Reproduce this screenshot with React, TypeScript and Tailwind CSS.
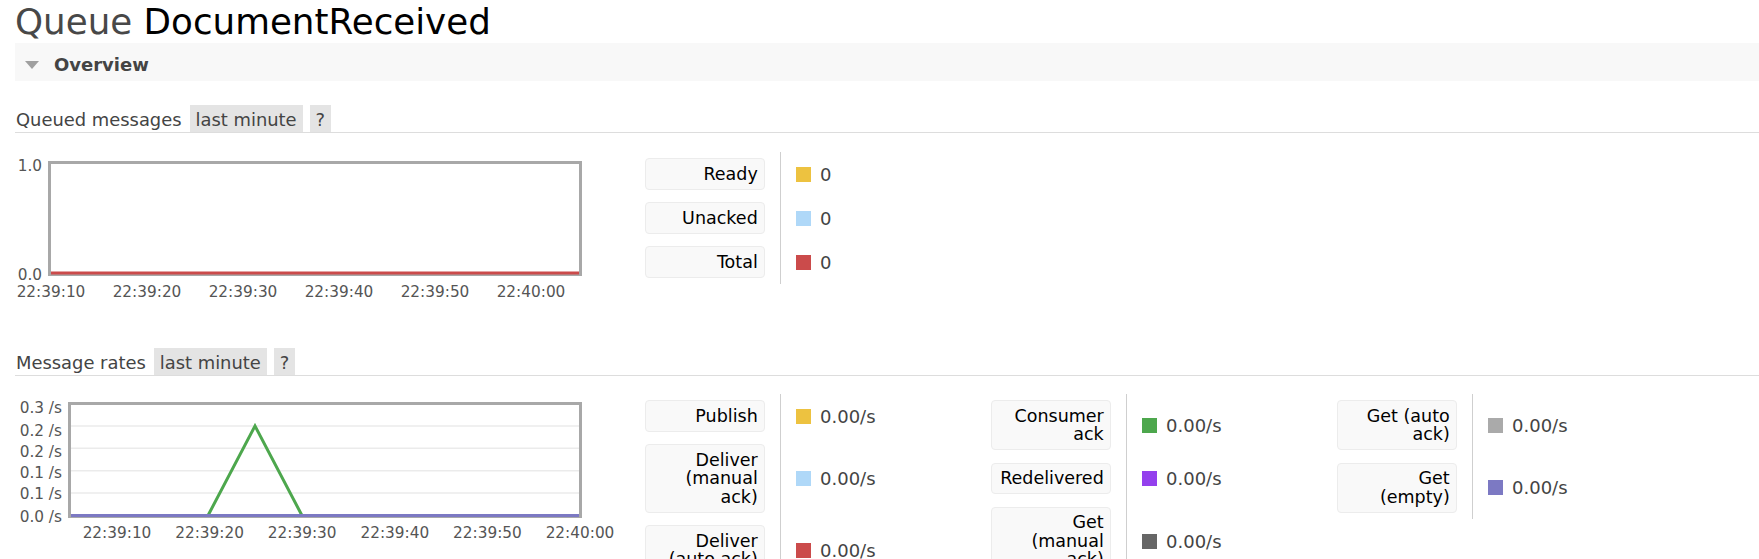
import React from 'react'

type Row = { label: string; color: string; value: string }

const queued: Row[] = [
  { label: 'Ready', color: '#edc240', value: '0' },
  { label: 'Unacked', color: '#afd8f8', value: '0' },
  { label: 'Total', color: '#cb4b4b', value: '0' },
]

const rateGroups: Row[][] = [
  [
    { label: 'Publish', color: '#edc240', value: '0.00/s' },
    { label: 'Deliver (manual ack)', color: '#afd8f8', value: '0.00/s' },
    { label: 'Deliver (auto ack)', color: '#cb4b4b', value: '0.00/s' },
  ],
  [
    { label: 'Consumer ack', color: '#4da74d', value: '0.00/s' },
    { label: 'Redelivered', color: '#9440ed', value: '0.00/s' },
    { label: 'Get (manual ack)', color: '#666666', value: '0.00/s' },
  ],
  [
    { label: 'Get (auto ack)', color: '#aaaaaa', value: '0.00/s' },
    { label: 'Get (empty)', color: '#7c79c3', value: '0.00/s' },
  ],
]

const font = "'DejaVu Sans', Verdana, sans-serif"

function Legend({ rows }: { rows: Row[] }) {
  return (
    <div className="grid grid-cols-[135px_211px] self-start">
      {rows.map((r) => (
        <React.Fragment key={r.label}>
          <div className="py-[6.25px] pr-[15px]">
            <div className="w-[120px] rounded-[4px] border border-[#ececec] bg-[#f9f9f9] px-[6.25px] py-[5.5px] text-right leading-[18.5px] text-black">
              {r.label}
            </div>
          </div>
          <div className="flex items-center border-l border-[#cfcfcf] pl-[15px] text-[18px] text-[#444]">
            <span className="mr-[9px] h-[15px] w-[15px] shrink-0" style={{ background: r.color }} />
            <span>{r.value}</span>
          </div>
        </React.Fragment>
      ))}
    </div>
  )
}

function SectionHeading({ title }: { title: string }) {
  return (
    <div className="ml-[15px] flex h-[28px] border-b border-[#dddddd] text-[17.9px] leading-[27px] text-[#444]">
      <span className="pl-[1px] pt-[1px]">{title}</span>
      <span className="ml-[8px] bg-[#e4e4e4] px-[6px] pt-[1px]">last minute</span>
      <span className="ml-[7px] bg-[#e4e4e4] px-[6px] pt-[1px]">?</span>
    </div>
  )
}

function QueuedChart() {
  const ticks = ['22:39:10', '22:39:20', '22:39:30', '22:39:40', '22:39:50', '22:40:00']
  return (
    <svg width="620" height="190" className="shrink-0" style={{ fontFamily: font }}>
      <rect x="49.5" y="29.5" width="531" height="112" fill="#fff" stroke="#a8a8a8" strokeWidth="3" />
      <line x1="51" x2="579" y1="140" y2="140" stroke="#cb4b4b" strokeWidth="3" />
      <text x="42" y="33" textAnchor="end" dominantBaseline="central" fontSize="15.3" fill="#555">1.0</text>
      <text x="42" y="142" textAnchor="end" dominantBaseline="central" fontSize="15.3" fill="#555">0.0</text>
      {ticks.map((t, i) => (
        <text key={t} x={51 + i * 96} y="159" textAnchor="middle" dominantBaseline="central" fontSize="15.3" fill="#555">
          {t}
        </text>
      ))}
    </svg>
  )
}

function RatesChart() {
  const ticks = ['22:39:10', '22:39:20', '22:39:30', '22:39:40', '22:39:50', '22:40:00']
  const grid = [49.9, 72.3, 94.7, 117.1]
  const yLabels = [
    { t: '0.3 /s', y: 32 },
    { t: '0.2 /s', y: 55 },
    { t: '0.2 /s', y: 76 },
    { t: '0.1 /s', y: 97 },
    { t: '0.1 /s', y: 118 },
    { t: '0.0 /s', y: 141 },
  ]
  return (
    <svg width="620" height="190" className="shrink-0" style={{ fontFamily: font }}>
      <rect x="69.5" y="27.5" width="511" height="113" fill="#fff" stroke="#a8a8a8" strokeWidth="3" />
      {grid.map((g) => (
        <line key={g} x1="71" x2="579" y1={g} y2={g} stroke="#ebebeb" strokeWidth="1.5" />
      ))}
      <polyline points="208,139.5 255,49.9 302,139.5" fill="none" stroke="#4da74d" strokeWidth="3" />
      <line x1="71" x2="579" y1="139.5" y2="139.5" stroke="#7c79c3" strokeWidth="3" />
      {yLabels.map((l, i) => (
        <text key={i} x="62" y={l.y} textAnchor="end" dominantBaseline="central" fontSize="15.3" fill="#555">
          {l.t}
        </text>
      ))}
      {ticks.map((t, i) => (
        <text key={t} x={117 + i * 92.6} y="157" textAnchor="middle" dominantBaseline="central" fontSize="15.3" fill="#555">
          {t}
        </text>
      ))}
    </svg>
  )
}

export default function App() {
  return (
    <div className="h-[559px] overflow-hidden bg-white font-['DejaVu_Sans',Verdana,sans-serif] text-[17.5px] text-[#444]">
      <h1 className="pl-[15px] pt-[2px] text-[35.7px] font-normal leading-[40px] text-[#484848]">
        Queue <span className="text-black">DocumentReceived</span>
      </h1>

      {/* Overview */}
      <div className="ml-[15px] mt-[1px] h-[38px] bg-[#f8f8f8] pl-[10px] pt-[6px]">
        <div className="flex h-[32px] items-center">
          <svg width="14" height="8" viewBox="0 0 14 8">
            <polygon points="0,0 14,0 7,8" fill="#a0a0a0" />
          </svg>
          <span className="ml-[15px] text-[18px] font-bold leading-[32px] text-[#444]">Overview</span>
        </div>
      </div>

      <div className="mt-[24px]">
        <SectionHeading title="Queued messages" />
      </div>
      <div className="flex">
        <QueuedChart />
        <div className="ml-[25px] mt-[19px]">
          <Legend rows={queued} />
        </div>
      </div>

      <div className="mt-[25px]">
        <SectionHeading title="Message rates" />
      </div>
      <div className="flex">
        <RatesChart />
        <div className="ml-[25px] mt-[18px] flex items-start">
          {rateGroups.map((g, i) => (
            <Legend key={i} rows={g} />
          ))}
        </div>
      </div>
    </div>
  )
}
